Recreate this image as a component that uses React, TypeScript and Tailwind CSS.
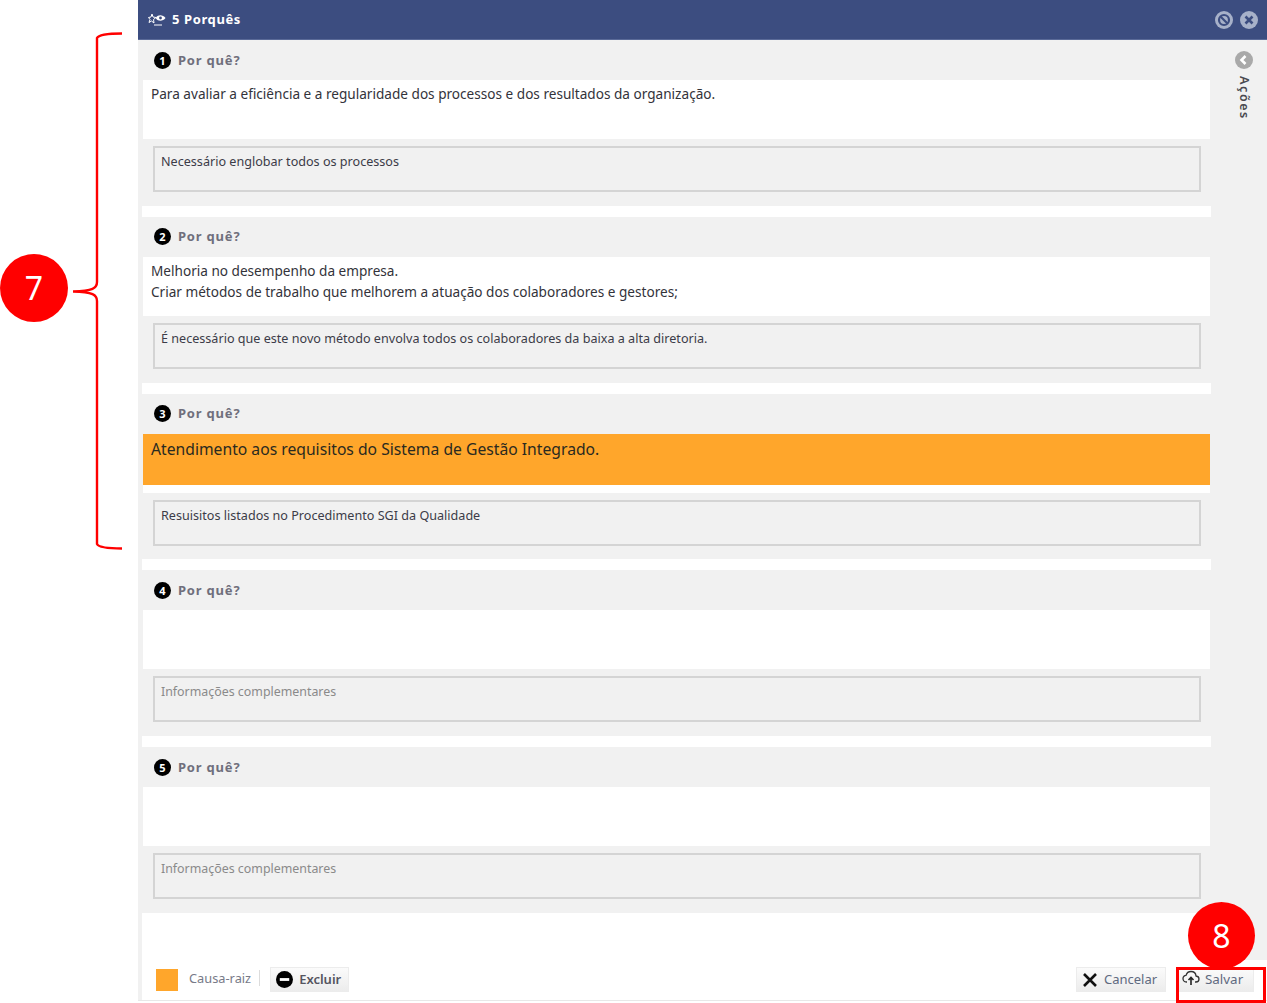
import React from "react";

const font = { fontFamily: '"Noto Sans", "Open Sans", sans-serif' };

type Row = { n: number; lines: string[]; note: string; highlight?: boolean; placeholder?: boolean };

const rows: Row[] = [
  {
    n: 1,
    lines: ["Para avaliar a eficiência e a regularidade dos processos e dos resultados da organização."],
    note: "Necessário englobar todos os processos",
  },
  {
    n: 2,
    lines: ["Melhoria no desempenho da empresa.", "Criar métodos de trabalho que melhorem a atuação dos colaboradores e gestores;"],
    note: "É necessário que este novo método envolva todos os colaboradores da baixa a alta diretoria.",
  },
  {
    n: 3,
    lines: ["Atendimento aos requisitos do Sistema de Gestão Integrado."],
    note: "Resuisitos listados no Procedimento SGI da Qualidade",
    highlight: true,
  },
  { n: 4, lines: [], note: "Informações complementares", placeholder: true },
  { n: 5, lines: [], note: "Informações complementares", placeholder: true },
];

function Section({ row }: { row: Row }) {
  return (
    <section className="h-[165.75px] bg-[#f1f1f1] flex flex-col shrink-0">
      <div className="h-10 flex items-center pl-3 gap-[7px] shrink-0">
        <span className="w-[17px] h-[17px] rounded-full bg-black text-white text-[11px] font-bold flex items-center justify-center leading-none">
          {row.n}
        </span>
        <span className="text-[13px] font-bold text-[#6f6f7c] tracking-[0.8px] leading-none">Por quê?</span>
      </div>
      {row.highlight ? (
        <div className="h-[59px] bg-white ml-px mr-px shrink-0">
          <div className="h-[51px] bg-[#ffa62b] pl-2 pt-[4px] text-[15.7px] leading-[22px] text-[#2a2a20]">
            {row.lines[0]}
          </div>
        </div>
      ) : (
        <div className="h-[59px] bg-white ml-px mr-px pl-2 pt-[3px] text-[13.6px] leading-[21px] text-[#33333a] shrink-0">
          {row.lines.map((l) => (
            <div key={l}>{l}</div>
          ))}
        </div>
      )}
      <div
        className={`mt-[7px] ml-[11px] mr-[10px] h-[46px] border-2 border-[#d4d4d4] pl-[6px] pt-[4px] leading-[20px] ${
          row.placeholder ? "text-[12.4px] text-[#8a8a8a]" : "text-[12.6px] text-[#3c3c48]"
        }`}
      >
        {row.note}
      </div>
    </section>
  );
}

function CircleIcon({ children, className }: { children: React.ReactNode; className: string }) {
  return (
    <svg viewBox="0 0 18 18" className={className} aria-hidden="true">
      {children}
    </svg>
  );
}

function Brace() {
  return (
    <svg width="50" height="520" viewBox="0 0 50 520" className="absolute left-[73px] top-[32px]" fill="none" aria-hidden="true">
      <path
        d="M49 1.5 C38 1.5 26 2 24 6 L24 250 C24 256 20 259 0 259.5 C20 260 24 263 24 269 L24 512 C26 516 38 516.5 49 516.5"
        stroke="#ff0000"
        strokeWidth="2.4"
      />
    </svg>
  );
}

const buttonClass =
  "h-[25px] flex items-center pl-[5px] border border-[#ececec] bg-gradient-to-b from-[#fbfbfb] to-[#ececec] text-[#5f6a80]";

export default function App() {
  return (
    <div className="relative w-[1267px] h-[1003px] bg-white overflow-hidden flex" style={font}>
      <div className="w-[138px] shrink-0" />
      <div className="flex-1 h-[1001px] flex flex-col border-b border-[#e8e8e8]">
        <header className="h-10 bg-[#3c4d80] border-b border-[#5a6a98] flex items-center pl-[10px] pr-[9px] shrink-0">
          <svg viewBox="0 0 18 14" className="w-[18px] h-[14px]" fill="none" aria-hidden="true">
            <path d="M4 1 L5 4 L8 4.5 L5.5 6.5 L6 10 L3.5 8 L1 9.5 L2 6.5 L0.5 4.5 L3 4 Z" stroke="#fff" strokeWidth="1" />
            <path d="M8 4.5 C10 1.5 15 1.5 17.5 5 C15 8.5 10 8.5 8 5.5 Z" fill="#fff" />
            <circle cx="12.5" cy="5" r="1.4" fill="#3c4d80" />
            <path d="M6 12 H14" stroke="#fff" strokeWidth="1" />
          </svg>
          <span className="ml-[6px] text-[13px] font-bold text-white tracking-[0.6px]">5 Porquês</span>
          <div className="ml-auto flex items-center gap-[7px]">
            <CircleIcon className="w-[18px] h-[18px]">
              <circle cx="9" cy="9" r="9" fill="#a7b1c9" />
              <circle cx="9" cy="9" r="5" fill="none" stroke="#3c4d80" strokeWidth="2.2" />
              <path d="M5.5 5.5 L12.5 12.5" stroke="#3c4d80" strokeWidth="2.2" />
            </CircleIcon>
            <CircleIcon className="w-[18px] h-[18px]">
              <circle cx="9" cy="9" r="9" fill="#a7b1c9" />
              <path d="M5.5 5.5 L12.5 12.5 M12.5 5.5 L5.5 12.5" stroke="#3c4d80" strokeWidth="2.6" />
            </CircleIcon>
          </div>
        </header>

        <div className="h-[920px] flex border-l-4 border-[#f1f1f1] shrink-0">
          <main className="w-[1069px] flex flex-col gap-[11px] bg-white shrink-0">
            {rows.map((r) => (
              <Section key={r.n} row={r} />
            ))}
          </main>
          <aside className="flex-1 bg-[#f1f1f1] flex flex-col items-center pl-[10px] pt-[11px]">
            <CircleIcon className="w-[18px] h-[18px]">
              <circle cx="9" cy="9" r="9" fill="#a9a9a9" />
              <path d="M10.5 5 L6.5 9 L10.5 13" fill="none" stroke="#fff" strokeWidth="2.6" />
            </CircleIcon>
            <span className="mt-[7px] text-[12.5px] font-semibold text-[#4a4a50] tracking-[1.6px] leading-none [writing-mode:vertical-rl]">
              Ações
            </span>
          </aside>
        </div>

        <footer className="flex-1 flex items-start pt-[7px] pl-[14px] border-l-4 border-[#f1f1f1] bg-white">
          <span className="w-[22px] h-[22px] mt-[2px] bg-[#ffa62b]" />
          <span className="ml-[11px] mt-[2px] text-[12.8px] leading-[18px] text-[#777a88]">Causa-raiz</span>
          <span className="ml-[8px] mt-[3px] h-4 w-px bg-[#dcdcdc]" />
          <button className={`${buttonClass} ml-[10px] w-[79px] gap-[6px] text-[13px] font-semibold text-[#555560]`}>
            <CircleIcon className="w-[17px] h-[17px]">
              <circle cx="9" cy="9" r="9" fill="#000" />
              <path d="M4 9 H14" stroke="#fff" strokeWidth="3" />
            </CircleIcon>
            Excluir
          </button>
          <button className={`${buttonClass} ml-auto w-[90px] gap-[6px] text-[13px]`}>
            <svg viewBox="0 0 16 16" className="w-4 h-4" aria-hidden="true">
              <path d="M2 2 L14 14 M14 2 L2 14" stroke="#111" strokeWidth="2.6" />
            </svg>
            Cancelar
          </button>
          <button className={`${buttonClass} ml-[10px] mr-[13px] w-[78px] gap-[5px] text-[13.4px]`}>
            <svg viewBox="0 0 18 16" className="w-[18px] h-4 -mt-1 shrink-0" fill="none" aria-hidden="true">
              <path d="M5 12 H4.5 C2 12 1 10 1 8.5 C1 6.7 2.5 5.3 4 5.4 C4.7 3 6.8 1.5 9 1.5 C11.8 1.5 13.8 3.5 14 6 C15.8 6.2 17 7.4 17 9 C17 10.8 15.6 12 14 12 H13" stroke="#333" strokeWidth="1.3" />
              <path d="M9 15 V8 M6.5 10 L9 7.5 L11.5 10" stroke="#222" strokeWidth="1.6" />
            </svg>
            Salvar
          </button>
        </footer>
      </div>

      <Brace />
      <div className="absolute left-0 top-[254px] w-[68px] h-[68px] rounded-full bg-[#ff0000] text-white text-[32px] leading-none flex items-center justify-center">
        7
      </div>
      <div className="absolute left-[1188px] top-[902px] w-[67px] h-[67px] rounded-full bg-[#ff0000] text-white text-[32px] leading-none flex items-center justify-center">
        8
      </div>
      <div className="absolute left-[1176px] top-[967px] w-[90px] h-[36px] border-[3px] border-[#ff0000]" />
    </div>
  );
}
